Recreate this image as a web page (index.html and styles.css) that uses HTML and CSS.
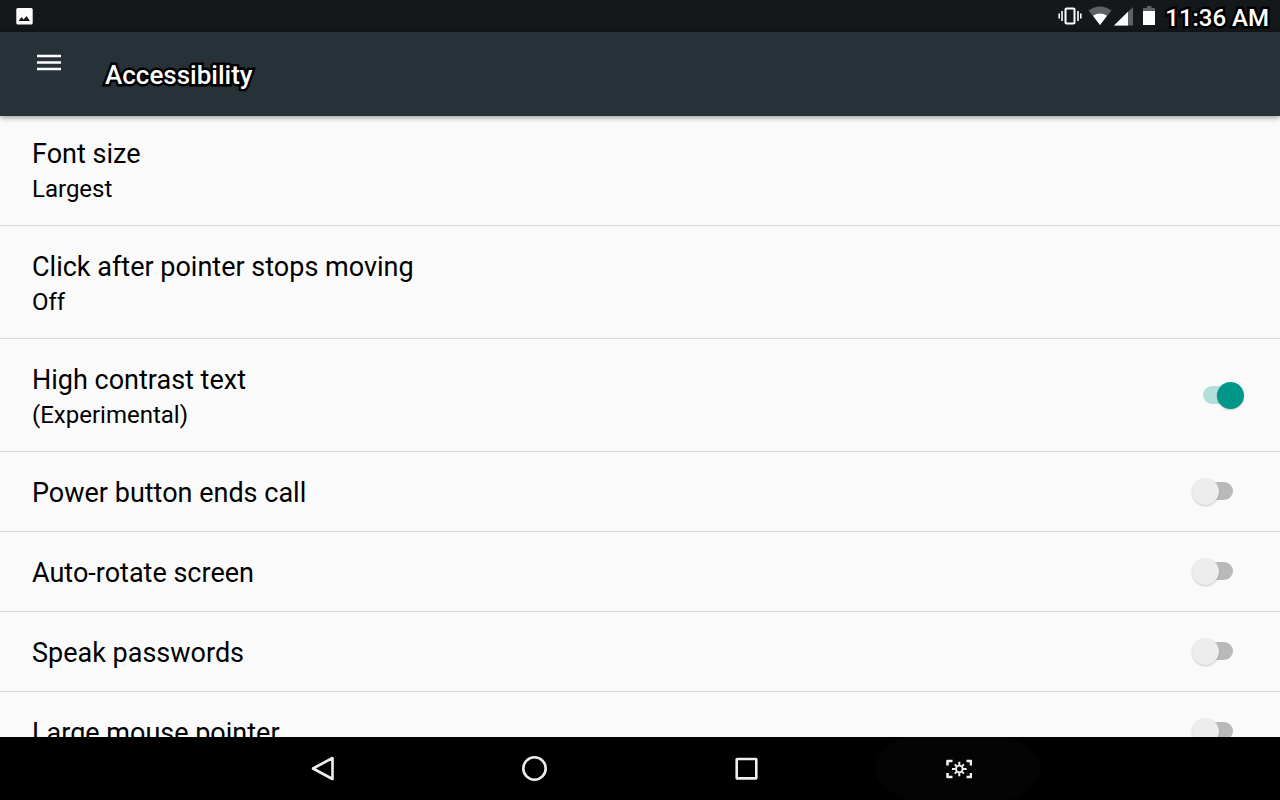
FILE: index.html
```html
<!DOCTYPE html>
<html lang="en">

<head>
    <meta charset="UTF-8">
    <meta name="viewport" content="width=device-width, initial-scale=1.0">
    <title>Accessibility</title>
    <link rel="stylesheet" href="styles.css">
</head>

<body>
    <div class="status-bar">
        <svg class="notification" width="18" height="18" viewBox="0 0 18 18">
            <rect x="0.3" y="1" width="16.4" height="16.4" rx="1.5" fill="#fff" />
            <path d="M2.5 14 L5.5 10 L7.5 12.5 L10.5 9 L14 14 Z" fill="#14181b" />
        </svg>
        <div class="status-icons">
            <svg width="24" height="20" viewBox="0 0 24 20">
                <rect x="7.5" y="2.5" width="9" height="15" rx="1" fill="none" stroke="#fff" stroke-width="2" />
                <path d="M4 5 V15 M20 5 V15 M1.2 7.5 V12.5 M22.8 7.5 V12.5" stroke="#fff" stroke-width="1.6" />
            </svg>
            <svg class="wifi" width="24" height="20" viewBox="0 0 24 20">
                <path d="M12 19 L0.5 4.5 Q12 -3.5 23.5 4.5 Z" fill="#5d6163" />
                <path d="M12 19 L5 9.8 Q12 5 19 9.8 Z" fill="#fff" />
            </svg>
            <svg class="signal" width="19" height="19" viewBox="0 0 19 19">
                <path d="M0 18.5 L19 0 V18.5 Z" fill="#5d6163" />
                <path d="M0 18.5 L14 4.8 V18.5 Z" fill="#fff" />
            </svg>
            <svg class="battery" width="12" height="20" viewBox="0 0 12 20">
                <path d="M0 5.5 V2 H4 V0 H8.5 V2 H12 V5.5 Z" fill="#5d6163" />
                <rect y="5" width="12" height="14" fill="#fff" />
            </svg>
        </div>
        <span class="clock">11:36 AM</span>
    </div>

    <header class="app-bar">
        <button class="menu-button" aria-label="Open menu">
            <svg width="24" height="18" viewBox="0 0 24 18">
                <path d="M0 2 H24 M0 8.5 H24 M0 15 H24" stroke="#fff" stroke-width="2.4" />
            </svg>
        </button>
        <h1>Accessibility</h1>
    </header>

    <main class="settings">
        <button class="row tall">
            <span class="text">
                <span class="title">Font size</span>
                <span class="summary">Largest</span>
            </span>
        </button>
        <button class="row tall">
            <span class="text">
                <span class="title">Click after pointer stops moving</span>
                <span class="summary">Off</span>
            </span>
        </button>
        <label class="row tall" for="contrast">
            <span class="text">
                <span class="title">High contrast text</span>
                <span class="summary">(Experimental)</span>
            </span>
            <input class="switch" type="checkbox" id="contrast" checked>
        </label>
        <label class="row" for="power">
            <span class="text">
                <span class="title">Power button ends call</span>
            </span>
            <input class="switch" type="checkbox" id="power">
        </label>
        <label class="row" for="rotate">
            <span class="text">
                <span class="title">Auto-rotate screen</span>
            </span>
            <input class="switch" type="checkbox" id="rotate">
        </label>
        <label class="row" for="passwords">
            <span class="text">
                <span class="title">Speak passwords</span>
            </span>
            <input class="switch" type="checkbox" id="passwords">
        </label>
        <label class="row" for="pointer">
            <span class="text">
                <span class="title">Large mouse pointer</span>
            </span>
            <input class="switch" type="checkbox" id="pointer">
        </label>
    </main>

    <nav class="nav-bar">
        <button aria-label="Back">
            <svg width="28" height="28" viewBox="0 0 28 28">
                <path d="M24.5 3 V24 L5 13.5 Z" />
            </svg>
        </button>
        <button aria-label="Home">
            <svg width="28" height="28" viewBox="0 0 28 28">
                <circle cx="14.5" cy="13.5" r="11.2" />
            </svg>
        </button>
        <button aria-label="Recent apps">
            <svg width="28" height="28" viewBox="0 0 28 28">
                <rect x="4.7" y="4" width="19.6" height="19.4" rx="0.5" />
            </svg>
        </button>
        <button class="pressed" aria-label="Screenshot">
            <svg width="28" height="28" viewBox="0 0 28 28">
                <path d="M3.5 10.5 V6 H8.5 M22.5 6 H27 V10.5 M27 18 V22 H22.5 M8.5 22 H3.5 V18" />
                <circle cx="15.3" cy="14" r="3.3" stroke-width="1.8" />
                <path d="M15.3 6.8 V10.3 M15.3 17.7 V21.3 M8 14 H11.6 M19 14 H22.6 M10.7 9.4 L12.7 11.4 M17.9 16.6 L19.9 18.6 M19.9 9.4 L17.9 11.4 M12.7 16.6 L10.7 18.6" stroke-width="2" />
            </svg>
        </button>
    </nav>
</body>

</html>
```
FILE: styles.css
```css
* {
    box-sizing: border-box;
}

body {
    margin: 0;
    height: 100vh;
    display: flex;
    flex-direction: column;
    overflow: hidden;
    font-family: Roboto, sans-serif;
    background-color: #fafafa;
    color: #000;
}

button {
    border: none;
    padding: 0;
    background: none;
    color: inherit;
    font-family: inherit;
    cursor: pointer;
}

svg {
    display: block;
}

/* Status bar */
.status-bar {
    flex: none;
    height: 32px;
    padding: 0 11px 0 16px;
    display: flex;
    align-items: center;
    background-color: #14181b;
    color: #fff;
}

.status-icons {
    margin-left: auto;
    display: flex;
    align-items: center;
}

.wifi {
    margin-left: 6px;
}

.signal {
    margin-left: 2px;
}

.battery {
    margin-left: 10px;
}

.clock {
    margin-left: 10px;
    padding-top: 4px;
    font-size: 24px;
    line-height: 28px;
    font-weight: 500;
}

.clock,
.app-bar h1 {
    -webkit-text-stroke: 5px #000;
    paint-order: stroke fill;
}

/* App bar */
.app-bar {
    flex: none;
    height: 84px;
    padding: 0 37px;
    display: flex;
    align-items: flex-start;
    gap: 44px;
    background-color: #273238;
    color: #fff;
    box-shadow: 0 1px 6px rgba(0, 0, 0, 0.45);
    z-index: 1;
}

.menu-button {
    padding: 22px 0;
}

.app-bar h1 {
    margin: 0;
    padding-top: 28px;
    font-size: 26px;
    line-height: 30px;
    font-weight: 500;
}

/* Settings list, scrolled slightly under the app bar */
.settings {
    flex: 1;
    min-height: 0;
    margin-top: -3px;
    overflow: hidden;
}

.row {
    width: 100%;
    min-height: 80px;
    padding: 0 36px 0 32px;
    display: flex;
    align-items: center;
    justify-content: space-between;
    border-bottom: 1px solid #d9d9d9;
    text-align: left;
    cursor: pointer;
}

.row.tall {
    min-height: 113px;
}

.text {
    padding-top: 2px;
}

.tall .text {
    padding-top: 4px;
}

.title,
.summary {
    display: block;
}

.title {
    font-size: 27px;
    line-height: 36px;
}

.summary {
    font-size: 24px;
    line-height: 34px;
}

.switch {
    appearance: none;
    position: relative;
    width: 52px;
    height: 27px;
    margin: 0;
    cursor: pointer;
}

.switch::before {
    content: "";
    position: absolute;
    top: 4px;
    left: 11px;
    width: 30px;
    height: 18px;
    border-radius: 9px;
    background-color: #b9b9b9;
}

.switch::after {
    content: "";
    position: absolute;
    top: 0;
    left: 0;
    width: 27px;
    height: 27px;
    border-radius: 50%;
    background-color: #ececec;
    box-shadow: 0 1px 2px rgba(0, 0, 0, 0.2);
}

.switch:checked::before {
    background-color: #b2dfda;
}

.switch:checked::after {
    left: 25px;
    background-color: #009688;
}

/* Navigation bar */
.nav-bar {
    flex: none;
    height: 63px;
    display: flex;
    justify-content: center;
    background-color: #000;
}

.nav-bar button {
    width: 212px;
    display: flex;
    align-items: center;
    justify-content: center;
}

.nav-bar svg {
    fill: none;
    stroke: #eee;
    stroke-width: 2.6;
    stroke-linejoin: round;
}

.nav-bar .pressed {
    background: radial-gradient(ellipse 84px 40px, #040404 98%, transparent);
}
```
